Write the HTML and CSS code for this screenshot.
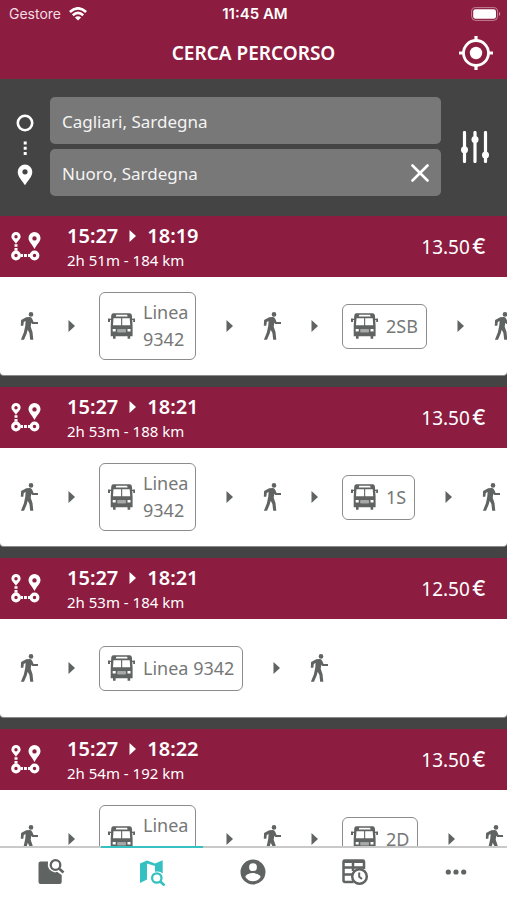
FILE: index.html
```html
<!DOCTYPE html>
<html lang="it">
<head>
<meta charset="utf-8">
<meta name="viewport" content="width=device-width, initial-scale=1">
<title>Cerca percorso</title>
<link rel="stylesheet" href="styles.css">
</head>
<body>
<svg class="sprite" aria-hidden="true">
  <symbol id="walk" viewBox="0 0 18 28">
    <circle cx="11" cy="2.4" r="2.3"/>
    <path d="M6.200 5.300 10 5.100Q11.900 5.300 12.400 7.200L13.600 9.900 18 10.100V12.100L12.300 12.100 11.300 10.800 10.700 14.800 12.500 20 13.300 27.800H10.200L9.400 21 7.700 17.800 6.700 21.600 4 27.800H.9L3.900 20.200 5.300 13.500 5.600 9.100 3.800 9.900 3.300 13.700H.8L1.100 8.100Z"/>
  </symbol>
  <symbol id="bus" viewBox="0 0 27 26">
    <path fill-rule="evenodd" d="M5 .3H22Q23.800 .3 24 3L24.600 13V23.200H2.700V13L3.200 3Q3.400 .3 5 .3ZM8.300 1.700 7.800 3.500H19.600L19.100 1.700ZM5.500 5.300 5 12.200H13.100V5.300ZM14.200 5.300V12.200H22.200L21.700 5.300ZM4.700 16V18.500H7.700V16ZM19.500 16V18.500H22.500V16ZM9.500 16.200V19.300H17.700V16.200Z"/>
    <path opacity=".55" d="M9.500 16.200H17.700V19.300H9.500Z"/>
    <path d="M0 5.400H2V9H0ZM25.200 5.400H27V9H25.200ZM1.500 5.800H3.500V7H1.500ZM23.500 5.800H25.500V7H23.500ZM5 23H7.600V25.800H5ZM19.600 23H22.200V25.800H19.600Z"/>
  </symbol>
  <symbol id="arrow" viewBox="0 0 7 12"><path d="M.5 0 7 6 .5 12Z"/></symbol>
  <symbol id="route" viewBox="0 0 30 29">
    <path fill-rule="evenodd" d="M5 0A4.600 4.600 0 0 1 9.600 4.600C9.600 7.500 6.500 9 5 12 3.500 9 .4 7.500 .4 4.600A4.600 4.600 0 0 1 5 0ZM5 3A1.700 1.700 0 1 0 5 6.400 1.700 1.700 0 0 0 5 3ZM23.500 0A6 6 0 0 1 29.500 6C29.500 10 25.500 12.500 23.500 17 21.500 12.500 17.500 10 17.500 6A6 6 0 0 1 23.500 0ZM23.500 4.200A2.200 2.200 0 1 0 23.500 8.600 2.200 2.200 0 0 0 23.500 4.200Z"/>
    <g fill="none" stroke="currentColor" stroke-width="3.200"><circle cx="5" cy="23.500" r="3.300"/><circle cx="23.500" cy="23.500" r="3.300"/></g>
    <path d="M3.500 12.300H6.500V14.700H3.500ZM3.500 16H6.500V18.700H3.500ZM9.500 22H12V25H9.500ZM13 22H15.900V25H13ZM17 22H19V25H17Z"/>
  </symbol>
</svg>

<div class="app">
  <header class="top">
    <div class="status">
      <span class="carrier">Gestore
        <svg class="wifi" viewBox="0 0 18 14"><g fill="none" stroke="currentColor" stroke-width="2.600"><path d="M.9 5Q9-2.400 17.100 5"/><path d="M3.800 8.200Q9 3.400 14.200 8.200"/></g><path d="M9 13.600 5.900 10.500Q9 8 12.100 10.500Z"/></svg>
      </span>
      <time class="clock">11:45 AM</time>
      <svg class="battery" viewBox="0 0 30 14"><rect x=".6" y=".6" width="26" height="12.800" rx="4" fill="none" stroke="currentColor" opacity=".45"/><rect x="2.200" y="2.200" width="22.800" height="9.600" rx="2.400"/><path d="M28 4.800Q30.500 7 28 9.200Z" opacity=".5"/></svg>
    </div>
    <div class="titlebar">
      <h1>CERCA PERCORSO</h1>
      <button class="locate" aria-label="Posizione attuale">
        <svg viewBox="0 0 34 34"><circle cx="17" cy="17" r="6.200"/><circle cx="17" cy="17" r="12.500" fill="none" stroke="currentColor" stroke-width="2.800"/><path d="M15.400 0H18.600V5H15.400ZM15.400 29H18.600V34H15.400ZM0 15.400H5V18.600H0ZM29 15.400H34V18.600H29Z"/></svg>
      </button>
    </div>
  </header>

  <form class="search">
    <svg class="endpoints" viewBox="0 0 18 72"><circle cx="9" cy="9" r="7.200" fill="none" stroke="currentColor" stroke-width="2.600"/><path d="M7.700 27.500H10.700V30.500H7.700ZM7.700 32.800H10.700V35.800H7.700ZM7.700 38H10.700V41H7.700Z"/><path fill-rule="evenodd" d="M9 50.500A7.300 7.300 0 0 1 16.300 57.800C16.300 63 11.500 67 9 71.300 6.500 67 1.700 63 1.700 57.800A7.300 7.300 0 0 1 9 50.500ZM9 55.200A2.600 2.600 0 1 0 9 60.400 2.600 2.600 0 0 0 9 55.200Z"/></svg>
    <div class="fields">
      <div class="field"><input type="text" aria-label="Partenza" value="Cagliari, Sardegna"></div>
      <div class="field">
        <input type="text" aria-label="Arrivo" value="Nuoro, Sardegna">
        <button type="button" class="clear" aria-label="Cancella"><svg viewBox="0 0 18 18"><path d="M1.500 1.500 16.500 16.500M16.500 1.500 1.500 16.500" fill="none" stroke="currentColor" stroke-width="2.600" stroke-linecap="round"/></svg></button>
      </div>
    </div>
    <button type="button" class="filters" aria-label="Filtri">
      <svg viewBox="0 0 28 32"><path d="M3.500 1.500V30.500M14 1.500V30.500M24.500 1.500V30.500" fill="none" stroke="currentColor" stroke-width="3.200" stroke-linecap="round"/><circle cx="3.500" cy="18.800" r="3.500"/><circle cx="14" cy="8.500" r="3.500"/><circle cx="24.500" cy="24" r="3.500"/></svg>
    </button>
  </form>

  <main class="results">
    <article class="card">
      <header class="summary">
        <svg class="route"><use href="#route"/></svg>
        <div class="trip">
          <h2 class="times">15:27 <svg class="arrow"><use href="#arrow"/></svg> 18:19</h2>
          <p class="length">2h 51m - 184 km</p>
        </div>
        <p class="price">13.50<span class="euro">€</span></p>
      </header>
      <div class="steps">
        <svg class="walk"><use href="#walk"/></svg>
        <svg class="arrow"><use href="#arrow"/></svg>
        <div class="line"><svg class="bus"><use href="#bus"/></svg><span class="name wrap">Linea 9342</span></div>
        <svg class="arrow"><use href="#arrow"/></svg>
        <svg class="walk"><use href="#walk"/></svg>
        <svg class="arrow"><use href="#arrow"/></svg>
        <div class="line"><svg class="bus"><use href="#bus"/></svg><span class="name">2SB</span></div>
        <svg class="arrow"><use href="#arrow"/></svg>
        <svg class="walk"><use href="#walk"/></svg>
      </div>
    </article>

    <article class="card">
      <header class="summary">
        <svg class="route"><use href="#route"/></svg>
        <div class="trip">
          <h2 class="times">15:27 <svg class="arrow"><use href="#arrow"/></svg> 18:21</h2>
          <p class="length">2h 53m - 188 km</p>
        </div>
        <p class="price">13.50<span class="euro">€</span></p>
      </header>
      <div class="steps">
        <svg class="walk"><use href="#walk"/></svg>
        <svg class="arrow"><use href="#arrow"/></svg>
        <div class="line"><svg class="bus"><use href="#bus"/></svg><span class="name wrap">Linea 9342</span></div>
        <svg class="arrow"><use href="#arrow"/></svg>
        <svg class="walk"><use href="#walk"/></svg>
        <svg class="arrow"><use href="#arrow"/></svg>
        <div class="line"><svg class="bus"><use href="#bus"/></svg><span class="name">1S</span></div>
        <svg class="arrow"><use href="#arrow"/></svg>
        <svg class="walk"><use href="#walk"/></svg>
      </div>
    </article>

    <article class="card">
      <header class="summary">
        <svg class="route"><use href="#route"/></svg>
        <div class="trip">
          <h2 class="times">15:27 <svg class="arrow"><use href="#arrow"/></svg> 18:21</h2>
          <p class="length">2h 53m - 184 km</p>
        </div>
        <p class="price">12.50<span class="euro">€</span></p>
      </header>
      <div class="steps">
        <svg class="walk"><use href="#walk"/></svg>
        <svg class="arrow"><use href="#arrow"/></svg>
        <div class="line"><svg class="bus"><use href="#bus"/></svg><span class="name">Linea 9342</span></div>
        <svg class="arrow"><use href="#arrow"/></svg>
        <svg class="walk"><use href="#walk"/></svg>
      </div>
    </article>

    <article class="card">
      <header class="summary">
        <svg class="route"><use href="#route"/></svg>
        <div class="trip">
          <h2 class="times">15:27 <svg class="arrow"><use href="#arrow"/></svg> 18:22</h2>
          <p class="length">2h 54m - 192 km</p>
        </div>
        <p class="price">13.50<span class="euro">€</span></p>
      </header>
      <div class="steps">
        <svg class="walk"><use href="#walk"/></svg>
        <svg class="arrow"><use href="#arrow"/></svg>
        <div class="line"><svg class="bus"><use href="#bus"/></svg><span class="name wrap">Linea 9342</span></div>
        <svg class="arrow"><use href="#arrow"/></svg>
        <svg class="walk"><use href="#walk"/></svg>
        <svg class="arrow"><use href="#arrow"/></svg>
        <div class="line"><svg class="bus"><use href="#bus"/></svg><span class="name">2D</span></div>
        <svg class="arrow"><use href="#arrow"/></svg>
        <svg class="walk"><use href="#walk"/></svg>
      </div>
    </article>
  </main>

  <nav class="tabs">
    <a class="tab" href="#fermate" aria-label="Fermate"><svg viewBox="0 0 28 28"><path d="M3.500 3.500H11Q9.500 12.500 18 14.500L20 13.800 24.700 17V24Q24.700 26 22.700 26H3.500Q1.500 26 1.500 24V5.500Q1.500 3.500 3.500 3.500Z"/><circle cx="18.500" cy="7" r="4.800" fill="none" stroke="currentColor" stroke-width="2.300"/><path d="M22 10.500 26.500 14.500" fill="none" stroke="currentColor" stroke-width="2.600"/></svg></a>
    <a class="tab active" href="#percorso" aria-label="Cerca percorso" aria-current="page"><svg viewBox="0 0 28 28"><path d="M2 5.500 9 2.500V21.500L2 25ZM9 2.500 17 5.500V8L9 5.500ZM17 5.500 24.700 2.200V15.500Q22 12.500 17 13.800Z"/><circle cx="18.800" cy="20" r="4.700" fill="none" stroke="currentColor" stroke-width="2.300"/><path d="M22.300 23.500 26.500 27.500" fill="none" stroke="currentColor" stroke-width="2.600"/></svg></a>
    <a class="tab" href="#profilo" aria-label="Profilo"><svg viewBox="0 0 28 28"><path fill-rule="evenodd" d="M14 1.500A12.500 12.500 0 1 0 14 26.500 12.500 12.500 0 0 0 14 1.500ZM14 5.300A3.900 3.900 0 1 1 14 13.100 3.900 3.900 0 0 1 14 5.300ZM14 23.200Q9 23.200 6.400 19C6.500 16.500 11.500 15.100 14 15.100S21.500 16.500 21.600 19Q19 23.200 14 23.200Z"/></svg></a>
    <a class="tab" href="#orari" aria-label="Orari"><svg viewBox="0 0 28 28"><path d="M12.500 24H3.700Q2.500 24 2.500 22.800V3.700Q2.500 2.500 3.700 2.500H21.800Q23 2.500 23 3.700V11M2.500 9.500H23M2.500 16.500H12M12 3V13M2.500 3.700H23" fill="none" stroke="currentColor" stroke-width="2.500"/><circle cx="18.500" cy="18.500" r="7.300" fill="none" stroke="currentColor" stroke-width="2.500"/><path d="M18.200 14.500V18.700L21 21" fill="none" stroke="currentColor" stroke-width="2"/></svg></a>
    <a class="tab" href="#altro" aria-label="Altro"><svg viewBox="0 0 28 28"><circle cx="6.300" cy="14" r="2.600"/><circle cx="14" cy="14" r="2.600"/><circle cx="21.700" cy="14" r="2.600"/></svg></a>
  </nav>
</div>
</body>
</html>
```
FILE: styles.css
```css
* { box-sizing: border-box; }

body {
  margin: 0;
  background: #444;
  font-family: "Noto Sans", "Open Sans", sans-serif;
}

h1, h2, p { margin: 0; }
svg { display: block; flex: none; fill: currentColor; }
.sprite { display: none; }

button {
  padding: 0;
  border: 0;
  background: none;
  color: #fff;
  cursor: pointer;
}

.app {
  display: flex;
  flex-direction: column;
  height: 100vh;
  overflow: hidden;
}

.top { background: #8c1c40; color: #fff; }

.status {
  display: grid;
  grid-template-columns: 1fr auto 1fr;
  align-items: center;
  height: 27px;
  padding: 0 6px 0 9px;
  font: 14px/20px Inter, sans-serif;
}
.carrier { display: flex; align-items: center; gap: 8px; color: #f3dde4; }
.wifi { width: 18px; height: 14px; color: #fff; }
.clock { font-size: 15px; font-weight: 600; }
.battery { width: 30px; height: 14px; justify-self: end; }

.titlebar {
  display: grid;
  grid-template-columns: 34px 1fr 34px;
  align-items: center;
  height: 52px;
  padding: 0 14px;
}
.titlebar h1 {
  grid-column: 2;
  font-size: 19px;
  line-height: 24px;
  font-weight: 600;
  text-align: center;
}
.locate svg { width: 34px; height: 34px; }

.search {
  display: flex;
  align-items: center;
  padding: 18px 18px 20px 16px;
  color: #fff;
}
.endpoints { width: 18px; height: 72px; margin: 6px 16px 0 0; }
.fields { display: flex; flex: 1; flex-direction: column; gap: 5px; min-width: 0; }
.field {
  display: flex;
  align-items: center;
  height: 47px;
  padding: 0 12px;
  border-radius: 5px;
  background: #787878;
}
.field input {
  flex: 1;
  min-width: 0;
  height: 26px;
  padding: 2px 0 0;
  border: 0;
  outline: 0;
  background: none;
  color: #f4f4f4;
  font: 17px/24px "Noto Sans", "Open Sans", sans-serif;
}
.clear svg { width: 18px; height: 18px; }
.filters { margin-left: 20px; }
.filters svg { width: 28px; height: 32px; }

.results {
  display: flex;
  flex: 1;
  flex-direction: column;
  gap: 11px;
  min-height: 0;
  overflow: hidden;
}
.card {
  flex: none;
  border-bottom: 1px solid #8a8a8a;
  border-radius: 0 0 4px 4px;
  background: #fff;
  overflow: hidden;
}
.summary {
  display: flex;
  align-items: center;
  height: 61px;
  padding: 0 21px 0 11px;
  background: #8c1c40;
  color: #fff;
}
.route { width: 30px; height: 29px; margin-right: 26px; }
.trip { flex: 1; }
.times {
  display: flex;
  align-items: center;
  gap: 11px;
  font-size: 20px;
  line-height: 26px;
  font-weight: 600;
}
.length { font-size: 15px; line-height: 22px; }
.price { display: flex; align-items: center; gap: 2px; font-size: 19px; line-height: 26px; }
.euro { font-size: 21px; font-weight: 500; font-family: Inter, sans-serif; }

.steps {
  display: flex;
  align-items: center;
  gap: 24px;
  height: 98px;
  padding-left: 14px;
  color: #5f6362;
}
.walk { width: 30px; height: 28px; }
.arrow { width: 7px; height: 12px; }
.line {
  display: flex;
  flex: none;
  align-items: center;
  gap: 8px;
  min-height: 45px;
  margin-right: 6px;
  padding: 6px 8px;
  border: 1px solid #8b8d8c;
  border-radius: 6px;
}
.bus { width: 27px; height: 26px; }
.name {
  color: #757877;
  font-size: 18px;
  line-height: 27px;
  white-space: nowrap;
}
.wrap { width: 44px; white-space: normal; }

.tabs {
  display: grid;
  flex: none;
  grid-template-columns: repeat(5, 1fr);
  height: 54px;
  background: #fff;
}
.tab {
  display: flex;
  justify-content: center;
  padding-top: 10px;
  border-top: 2px solid #c9c9c9;
  color: #5f6362;
}
.tab.active { border-color: #35c1c1; color: #35c1c1; }
.tab svg { width: 28px; height: 28px; }
```
